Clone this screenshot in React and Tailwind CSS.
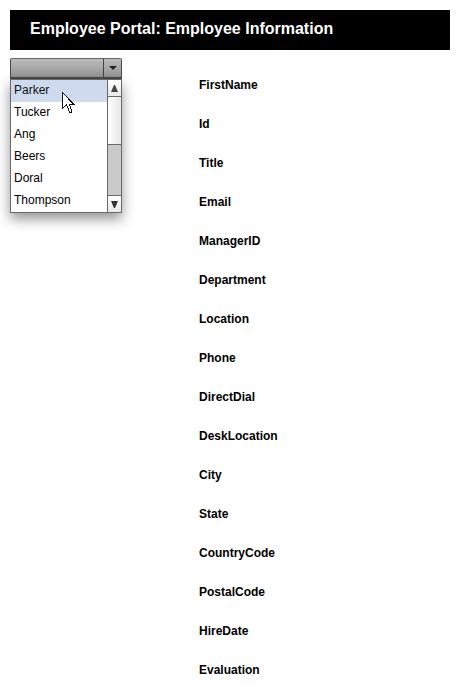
import { useState } from "react";

const employees = ["Parker", "Tucker", "Ang", "Beers", "Doral", "Thompson"];

const fields = [
  "FirstName",
  "Id",
  "Title",
  "Email",
  "ManagerID",
  "Department",
  "Location",
  "Phone",
  "DirectDial",
  "DeskLocation",
  "City",
  "State",
  "CountryCode",
  "PostalCode",
  "HireDate",
  "Evaluation",
];

function ScrollBar() {
  return (
    <div className="flex w-3.5 flex-col border-l border-[#696969]">
      <button type="button" aria-label="Scroll up" className="flex h-4 items-center justify-center bg-linear-to-b from-white to-[#e8e8e8]">
        <svg width="7" height="7" viewBox="0 0 7 7" fill="#444" aria-hidden="true">
          <path d="M3 0h1L7 7H0z" />
        </svg>
      </button>
      <div className="h-[49px] border-y border-[#696969] bg-linear-to-r from-white to-[#e6e6e6]" />
      <div className="flex-1 bg-[#cacaca]" />
      <button type="button" aria-label="Scroll down" className="flex h-[17px] items-center justify-center border-t border-[#696969] bg-linear-to-b from-white to-[#e8e8e8]">
        <svg width="7" height="7" viewBox="0 0 7 7" fill="#333" aria-hidden="true">
          <path d="M0 0h7L4 7H3z" />
        </svg>
      </button>
    </div>
  );
}

function Pointer() {
  return (
    <svg className="pointer-events-none absolute left-[52px] top-[34px]" width="13" height="21" viewBox="0 0 13 21" aria-hidden="true" shapeRendering="crispEdges">
      <path d="M.5.5v16L4.5 12.5l3 7.5h2l.5-1-3-7h4.5z" fill="#fff" stroke="#111" />
    </svg>
  );
}

function EmployeePicker() {
  const [open, setOpen] = useState(true);
  const [selected, setSelected] = useState("");
  const [hovered, setHovered] = useState("Parker");

  return (
    <div className="relative w-28">
      <button
        type="button"
        aria-label="Employee"
        aria-expanded={open}
        onClick={() => setOpen(!open)}
        className="flex h-[21px] w-full rounded-t-xs border border-b-2 border-[#4a4a4a] border-t-[#666] bg-linear-to-b from-[#bcbcbc] to-[#949494] text-left text-xs"
      >
        <span className="h-full flex-1 px-1">{selected}</span>
        <span className="flex h-full w-[18px] items-center justify-center border-l border-[#444]">
          <svg width="8" height="4" viewBox="0 0 8 4" fill="#222" aria-hidden="true">
            <path d="M0 0h8L4 4z" />
          </svg>
        </span>
      </button>
      {open && (
        <div className="absolute top-full left-0 flex h-[134px] w-full border border-[#696969] bg-white shadow-[0_6px_12px_rgba(0,0,0,0.42)]">
          <select
            size={6}
            aria-label="Employee names"
            value={selected}
            onChange={(event) => {
              setSelected(event.target.value);
              setOpen(false);
            }}
            className="h-full min-w-0 flex-1 appearance-none overflow-hidden bg-white text-xs text-black outline-none"
          >
            {employees.map((name) => (
              <option
                key={name}
                value={name}
                onMouseEnter={() => setHovered(name)}
                className={`h-[22px] px-[3px] pt-[3px] pb-0 ${hovered === name ? "bg-[#cedbef]" : "bg-white"}`}
              >
                {name}
              </option>
            ))}
          </select>
          <ScrollBar />
        </div>
      )}
      <Pointer />
    </div>
  );
}

export default function App() {
  return (
    <div className="bg-white px-2.5 pt-2.5 font-['Liberation_Sans',Arial,sans-serif] text-black">
      <header className="flex h-10 items-center bg-black px-5">
        <h1 className="pb-0.5 text-base font-bold text-white">Employee Portal: Employee Information</h1>
      </header>
      <main className="flex items-start gap-[77px] pt-2">
        <EmployeePicker />
        <dl className="flex flex-1 flex-col gap-[23px] pt-[19px]">
          {fields.map((field) => (
            <div key={field} className="flex gap-2 text-xs">
              <dt className="font-bold">{field}</dt>
              <dd />
            </div>
          ))}
        </dl>
      </main>
    </div>
  );
}
